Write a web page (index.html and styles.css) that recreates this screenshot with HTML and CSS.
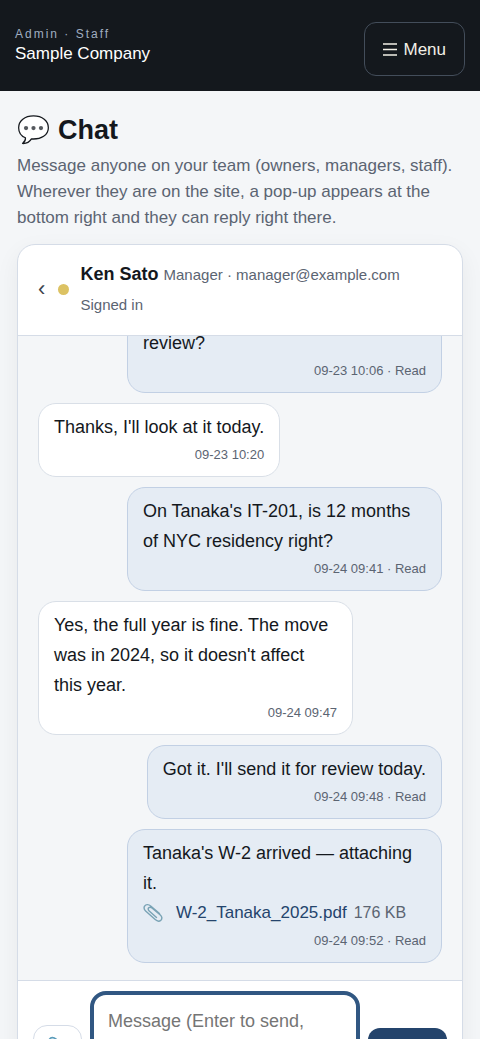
FILE: index.html
```html
<!DOCTYPE html>
<html lang="en">
<head>
<meta charset="utf-8">
<meta name="viewport" content="width=device-width, initial-scale=1">
<title>Chat</title>
<link rel="stylesheet" href="styles.css">
</head>
<body>
<header class="topbar">
  <div class="brand">
    <span class="brand-role">Admin · Staff</span>
    <span class="brand-name">Sample Company</span>
  </div>
  <button class="menu-button" type="button">
    <svg class="menu-icon" viewBox="0 0 14 14" aria-hidden="true"><path d="M0 1h14M0 6.500h14M0 12h14" stroke="currentColor" stroke-width="1.600"/></svg>
    Menu
  </button>
</header>
<main class="page">
  <h1 class="title">
    <svg class="title-icon" viewBox="0 0 34 32" aria-hidden="true">
      <path d="M17 1.5C8 1.5 1.7 6.4 1.7 13.6c0 5.300 2.900 8.700 7 10.400 .3 2.500-.7 4.200-3 5.900 4.100 .2 7.500-1.900 9.200-4.700 10.300 .7 17.400-4.200 17.400-11.600C32.300 6.400 26 1.500 17 1.500z" fill="#fff" stroke="#15191e" stroke-width="1.300" stroke-linejoin="round"/>
      <circle cx="9.300" cy="14" r="2.200" fill="#55595e"/><circle cx="17" cy="14" r="2.200" fill="#55595e"/><circle cx="24.700" cy="14" r="2.200" fill="#55595e"/>
    </svg>
    Chat
  </h1>
  <p class="intro">Message anyone on your team (owners, managers, staff). Wherever they are on the site, a pop-up appears at the bottom right and they can reply right there.</p>
  <section class="chat">
    <div class="chat-head">
      <button class="back" type="button" aria-label="Back">‹</button>
      <span class="status-dot"></span>
      <div class="peer"><strong class="peer-name">Ken Sato</strong> <span class="peer-info">Manager · manager@example.com Signed in</span></div>
    </div>
    <div class="messages">
      <article class="bubble mine full"><p class="text">review?</p><p class="meta">09-23 10:06 · Read</p></article>
      <article class="bubble"><p class="text">Thanks, I'll look at it today.</p><p class="meta">09-23 10:20</p></article>
      <article class="bubble mine"><p class="text">On Tanaka's IT-201, is 12 months of NYC residency right?</p><p class="meta">09-24 09:41 · Read</p></article>
      <article class="bubble"><p class="text">Yes, the full year is fine. The move was in 2024, so it doesn't affect this year.</p><p class="meta">09-24 09:47</p></article>
      <article class="bubble mine"><p class="text">Got it. I'll send it for review today.</p><p class="meta">09-24 09:48 · Read</p></article>
      <article class="bubble mine">
        <p class="text">Tanaka's W-2 arrived — attaching it.</p>
        <div class="attachment">
          <svg class="clip" viewBox="0 0 20 20" aria-hidden="true"><path d="M16.500 10.500 8 3.200C5.500 1 2.800 1.300 1.600 3.200c-1 1.700-.5 3.300 1 4.700l9.600 8.700c1.900 1.700 4.200 2 5.700 .6 1.500-1.500 1.200-3.500-.6-5.100L9 5C7.800 4 6.500 4 5.700 4.800c-.8 1-.6 2.100 .5 3.100l7.300 6.500" fill="none" stroke="#79a3b5" stroke-width="1.400" stroke-linecap="round"/></svg>
          <a class="file" href="#">W-2_Tanaka_2025.pdf</a>
          <span class="size">176 KB</span>
        </div>
        <p class="meta">09-24 09:52 · Read</p>
      </article>
    </div>
    <form class="composer">
      <button class="attach" type="button" aria-label="Attach a file">
        <svg class="clip" viewBox="0 0 20 20" aria-hidden="true"><path d="M16.500 10.500 8 3.200C5.500 1 2.800 1.300 1.600 3.200c-1 1.700-.5 3.300 1 4.700l9.600 8.700c1.900 1.700 4.200 2 5.700 .6 1.500-1.500 1.200-3.500-.6-5.100L9 5C7.800 4 6.500 4 5.700 4.800c-.8 1-.6 2.100 .5 3.100l7.300 6.500" fill="none" stroke="#5c9dbb" stroke-width="1.800" stroke-linecap="round"/></svg>
      </button>
      <textarea class="entry" rows="3" aria-label="Message" placeholder="Message (Enter to send, Shift+Enter for a new line)"></textarea>
      <button class="send" type="submit">Send</button>
    </form>
  </section>
</main>
</body>
</html>
```
FILE: styles.css
```css
* { box-sizing: border-box; }
body { margin: 0; background: #f4f6f8; color: #14181d; font-family: "Liberation Sans", Arial, sans-serif; font-size: 18px; line-height: 30px; }
button, textarea { font: inherit; }
p, h1 { margin: 0; }

.topbar { display: flex; align-items: center; justify-content: space-between; padding: 22px 15px 15px; background: #14181d; }
.brand { display: flex; flex-direction: column; padding-bottom: 6px; }
.brand-role { font-size: 12px; line-height: 16px; letter-spacing: 2px; color: #a0aec0; }
.brand-name { font-size: 17px; line-height: 24px; color: #fff; }
.menu-button { display: flex; align-items: center; gap: 6px; padding: 12px 18px 10px; border: 1px solid #434d5a; border-radius: 12px; background: transparent; color: #f2efe6; font-size: 17px; }
.menu-icon { width: 14px; height: 14px; }

.page { padding: 20px 17px; }
.title { display: flex; align-items: center; gap: 8px; font-size: 27px; line-height: 38px; }
.title-icon { width: 33px; height: 32px; }
.intro { margin: 4px 0 13px; color: #5b6472; font-size: 17px; line-height: 26px; }

.chat { overflow: hidden; border: 1px solid #d5dce7; border-radius: 18px; background: #fff; box-shadow: 0 8px 24px rgba(20, 24, 29, 0.06); }
.chat-head { display: flex; align-items: center; padding: 14px 20px 16px; border-bottom: 1px solid #d5dce7; }
.back { padding: 0; border: 0; background: none; color: #3c434d; font-size: 22px; width: 8px; }
.status-dot { flex: none; width: 11px; height: 11px; margin: 0 12px; border-radius: 50%; background: #dcc263; }
.peer-info { color: #5b6472; font-size: 15px; line-height: 20px; }

.messages { display: flex; flex-direction: column; justify-content: flex-end; align-items: flex-start; gap: 10px; height: 62vh; padding: 0 20px 17px; overflow: hidden; background: #f4f6f8; }
.bubble { flex: none; max-width: 78%; padding: 8px 15px; border: 1px solid #d9dfe7; border-radius: 18px; background: #fff; }
.mine { align-self: flex-end; border-color: #c2d0e4; background: #e5ecf4; }
.full { width: 78%; }
.meta { color: #5b6472; font-size: 13px; line-height: 26px; text-align: right; }
.attachment { display: flex; align-items: center; }
.clip { width: 20px; height: 20px; }
.file { margin: 0 7px 0 13px; color: #24446c; font-size: 17px; text-decoration: none; }
.size { color: #5b6472; font-size: 16px; }

.composer { display: flex; align-items: center; gap: 8px; padding: 10px 15px; border-top: 1px solid #d5dce7; }
.attach { display: flex; align-items: flex-start; justify-content: center; flex: none; width: 49px; height: 60px; padding: 10px 0; border: 1px solid #d5dce7; border-radius: 14px; background: #fff; }
.entry { flex: 1; min-width: 0; resize: none; padding: 11px 14px 18px; border: 4px solid #315782; border-radius: 16px; outline: 0; background: #fff; color: #14181d; }
.entry::placeholder { color: #757575; }
.send { flex: none; width: 79px; height: 54px; padding: 0; border: 0; border-radius: 12px; background: #24446c; color: #fff; }
```
